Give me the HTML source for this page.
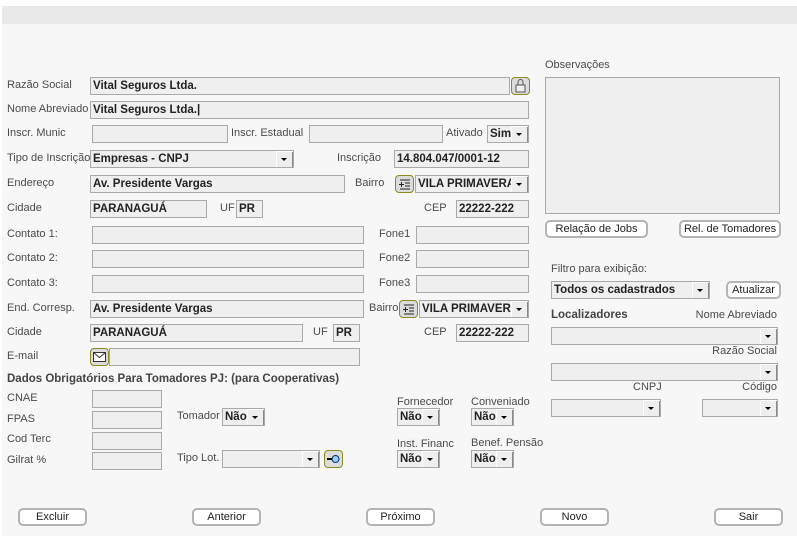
<!DOCTYPE html>
<html><head><meta charset="utf-8"><style>
*{box-sizing:border-box;margin:0;padding:0}
body{width:797px;height:545px;background:#fff;position:relative;overflow:hidden;font-family:"Liberation Sans",sans-serif;font-size:11px;color:#4a4a4a}
#pg{position:absolute;left:2px;top:6px;width:795px;height:530px;background:#f7f7f7}
#band{position:absolute;left:2px;top:6px;width:795px;height:18px;background:#e9e9e9}
.l{position:absolute;white-space:nowrap;line-height:13px}
.r{text-align:right}
.i{position:absolute;height:18px;background:#efefef;border:1px solid #a9a9a9;font-weight:bold;color:#222;padding-left:2px;line-height:16px;white-space:nowrap;overflow:hidden;font-size:11.5px}
.s{position:absolute;height:18px;background:#efefef;border:1px solid #a9a9a9;font-weight:bold;color:#222;padding-left:2px;line-height:16px;white-space:nowrap;overflow:hidden;font-size:11.5px}
.s:after{content:"";position:absolute;right:0;top:0;width:16px;height:16px;background:#eee;border-left:1px solid #fff;border-top:1px solid #fff;box-shadow:inset -1px -1px 0 #888}
.s:before{content:"";position:absolute;right:6px;top:7px;border-left:3px solid transparent;border-right:3px solid transparent;border-top:3px solid #000;z-index:2}
.b{position:absolute;height:18px;background:#fff;border:2px solid #b4b4b4;border-radius:5px;text-align:center;line-height:14px;color:#222;font-size:11px}
.ic{position:absolute;width:19px;height:18px;border:1px solid #8a8a20;border-radius:4px;background:#dcdcdc}
.h{font-weight:bold;color:#444}
</style></head><body>
<div id="pg"></div><div id="band"></div>

<div class="l" style="left:7px;top:79px">Razão Social</div>
<div class="i" style="left:90px;top:77px;width:420px">Vital Seguros Ltda.</div>
<div class="ic" style="left:511px;top:77px"><svg width="17" height="16"><rect x="4" y="7" width="9" height="7" fill="#eee" stroke="#555"/><path d="M6 7V4a2.5 2.5 0 0 1 5 0v3" fill="none" stroke="#555"/></svg></div>

<div class="l" style="left:7px;top:103px">Nome Abreviado</div>
<div class="i" style="left:90px;top:101px;width:439px">Vital Seguros Ltda.|</div>

<div class="l" style="left:7px;top:127px">Inscr. Munic</div>
<div class="i" style="left:92px;top:125px;width:136px"></div>
<div class="l" style="left:231px;top:127px">Inscr. Estadual</div>
<div class="i" style="left:309px;top:125px;width:134px"></div>
<div class="l" style="left:446px;top:127px">Ativado</div>
<div class="s" style="left:487px;top:125px;width:42px">Sim</div>

<div class="l" style="left:7px;top:152px">Tipo de Inscrição</div>
<div class="s" style="left:90px;top:150px;width:204px">Empresas - CNPJ</div>
<div class="l" style="left:337px;top:152px">Inscrição</div>
<div class="i" style="left:394px;top:150px;width:135px">14.804.047/0001-12</div>

<div class="l" style="left:7px;top:177px">Endereço</div>
<div class="i" style="left:90px;top:175px;width:255px">Av. Presidente Vargas</div>
<div class="l" style="left:355px;top:177px">Bairro</div>
<div class="ic" style="left:395px;top:175px"><svg width="17" height="16"><path d="M4 4h10M9 7h5M9 10h5M4 13h10M3 8.5h5M5.5 6v5" stroke="#222" fill="none"/></svg></div>
<div class="s" style="left:415px;top:175px;width:114px">VILA PRIMAVERA</div>

<div class="l" style="left:7px;top:202px">Cidade</div>
<div class="i" style="left:90px;top:200px;width:117px">PARANAGUÁ</div>
<div class="l" style="left:220px;top:202px">UF</div>
<div class="i" style="left:236px;top:200px;width:27px">PR</div>
<div class="l" style="left:424px;top:202px">CEP</div>
<div class="i" style="left:456px;top:200px;width:73px">22222-222</div>

<div class="l" style="left:7px;top:228px">Contato 1:</div>
<div class="i" style="left:92px;top:226px;width:272px"></div>
<div class="l" style="left:379px;top:228px">Fone1</div>
<div class="i" style="left:416px;top:226px;width:113px"></div>
<div class="l" style="left:7px;top:252px">Contato 2:</div>
<div class="i" style="left:92px;top:250px;width:272px"></div>
<div class="l" style="left:379px;top:252px">Fone2</div>
<div class="i" style="left:416px;top:250px;width:113px"></div>
<div class="l" style="left:7px;top:277px">Contato 3:</div>
<div class="i" style="left:92px;top:275px;width:272px"></div>
<div class="l" style="left:379px;top:277px">Fone3</div>
<div class="i" style="left:416px;top:275px;width:113px"></div>

<div class="l" style="left:7px;top:302px">End. Corresp.</div>
<div class="i" style="left:90px;top:300px;width:274px">Av. Presidente Vargas</div>
<div class="l" style="left:369px;top:302px">Bairro</div>
<div class="ic" style="left:399px;top:300px"><svg width="17" height="16"><path d="M4 4h10M9 7h5M9 10h5M4 13h10M3 8.5h5M5.5 6v5" stroke="#222" fill="none"/></svg></div>
<div class="s" style="left:419px;top:300px;width:110px">VILA PRIMAVER</div>

<div class="l" style="left:7px;top:326px">Cidade</div>
<div class="i" style="left:90px;top:324px;width:213px">PARANAGUÁ</div>
<div class="l" style="left:313px;top:326px">UF</div>
<div class="i" style="left:333px;top:324px;width:27px">PR</div>
<div class="l" style="left:424px;top:326px">CEP</div>
<div class="i" style="left:456px;top:324px;width:73px">22222-222</div>

<div class="l" style="left:7px;top:350px">E-mail</div>
<div class="ic" style="left:90px;top:348px"><svg width="17" height="16"><rect x="2.5" y="3.5" width="12" height="9" fill="#fff" stroke="#333"/><path d="M2.5 3.5l6 5 6-5" fill="none" stroke="#333"/></svg></div>
<div class="i" style="left:109px;top:348px;width:251px"></div>

<div class="l h" style="left:7px;top:373px;font-size:11.5px">Dados Obrigatórios Para Tomadores PJ: (para Cooperativas)</div>
<div class="l" style="left:7px;top:392px">CNAE</div>
<div class="i" style="left:92px;top:390px;width:70px"></div>
<div class="l" style="left:7px;top:413px">FPAS</div>
<div class="i" style="left:92px;top:411px;width:70px"></div>
<div class="l" style="left:7px;top:433px">Cod Terc</div>
<div class="i" style="left:92px;top:432px;width:70px"></div>
<div class="l" style="left:7px;top:454px">Gilrat %</div>
<div class="i" style="left:92px;top:452px;width:70px"></div>

<div class="l" style="left:177px;top:410px">Tomador</div>
<div class="s" style="left:222px;top:408px;width:43px">Não</div>
<div class="l" style="left:177px;top:452px">Tipo Lot.</div>
<div class="s" style="left:222px;top:450px;width:98px"></div>
<div class="ic" style="left:324px;top:450px"><svg width="17" height="16"><circle cx="10.5" cy="8" r="3.5" fill="#9cf" stroke="#036"/><path d="M2 8h5" stroke="#000" stroke-width="2"/></svg></div>

<div class="l" style="left:397px;top:396px">Fornecedor</div>
<div class="s" style="left:397px;top:408px;width:43px">Não</div>
<div class="l" style="left:471px;top:396px">Conveniado</div>
<div class="s" style="left:471px;top:408px;width:43px">Não</div>
<div class="l" style="left:397px;top:438px">Inst. Financ</div>
<div class="s" style="left:397px;top:450px;width:43px">Não</div>
<div class="l" style="left:471px;top:437px">Benef. Pensão</div>
<div class="s" style="left:471px;top:450px;width:43px">Não</div>

<div class="b" style="left:18px;top:508px;width:69px">Excluir</div>
<div class="b" style="left:192px;top:508px;width:69px">Anterior</div>
<div class="b" style="left:366px;top:508px;width:69px">Próximo</div>
<div class="b" style="left:540px;top:508px;width:69px">Novo</div>
<div class="b" style="left:714px;top:508px;width:69px">Sair</div>

<div class="l" style="left:545px;top:59px">Observações</div>
<div class="i" style="left:545px;top:77px;width:235px;height:137px"></div>
<div class="b" style="left:545px;top:220px;width:103px">Relação de Jobs</div>
<div class="b" style="left:679px;top:220px;width:102px">Rel. de Tomadores</div>
<div class="l" style="left:551px;top:263px">Filtro para exibição:</div>
<div class="s" style="left:551px;top:281px;width:159px">Todos os cadastrados</div>
<div class="b" style="left:726px;top:281px;width:55px">Atualizar</div>
<div class="l h" style="left:551px;top:309px;font-size:11.5px">Localizadores</div>
<div class="l r" style="left:640px;top:309px;width:137px">Nome Abreviado</div>
<div class="s" style="left:551px;top:327px;width:227px"></div>
<div class="l r" style="left:640px;top:345px;width:137px">Razão Social</div>
<div class="s" style="left:551px;top:363px;width:227px"></div>
<div class="l" style="left:633px;top:381px">CNPJ</div>
<div class="l r" style="left:700px;top:381px;width:77px">Código</div>
<div class="s" style="left:551px;top:399px;width:110px"></div>
<div class="s" style="left:702px;top:399px;width:76px"></div>
</body></html>
